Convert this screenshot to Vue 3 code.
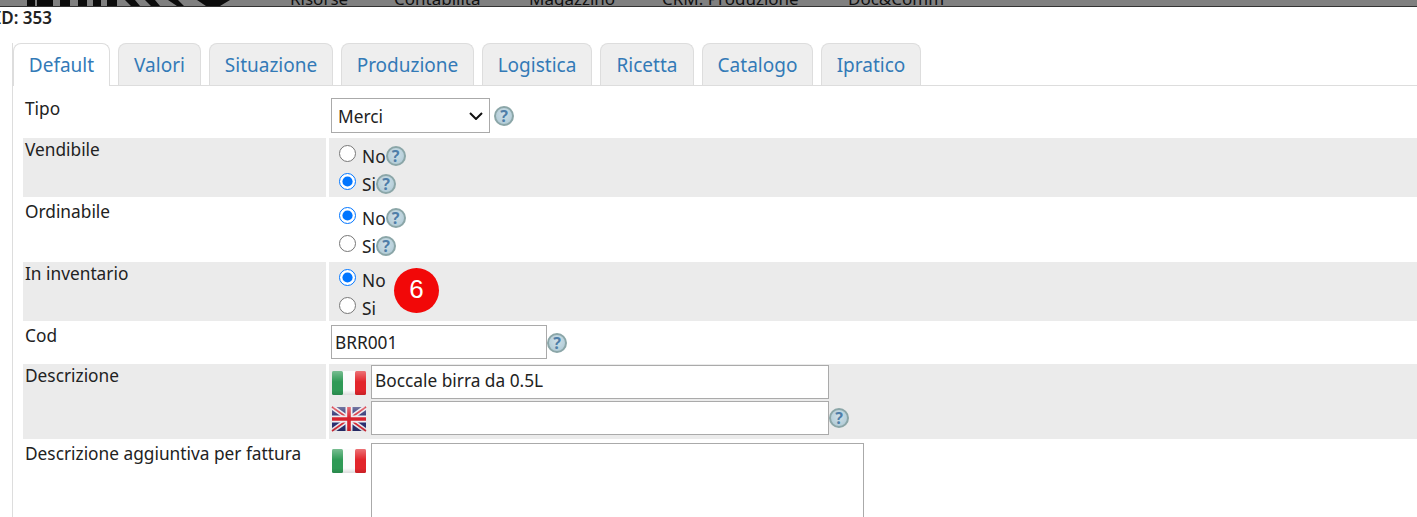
<script setup>
const tabs = [
  { t: 'Default', w: 97 },
  { t: 'Valori', w: 83 },
  { t: 'Situazione', w: 124 },
  { t: 'Produzione', w: 133 },
  { t: 'Logistica', w: 110 },
  { t: 'Ricetta', w: 94 },
  { t: 'Catalogo', w: 111 },
  { t: 'Ipratico', w: 100 }
]
const nav = [
  { t: 'Risorse', w: 104 },
  { t: 'Contabilità', w: 135 },
  { t: 'Magazzino', w: 133 },
  { t: 'CRM: Produzione', w: 186 },
  { t: 'Doc&Comm', w: 100 }
]
const radios = [
  { label: 'Vendibile', name: 'v', checked: 'Si', help: true, badge: false },
  { label: 'Ordinabile', name: 'o', checked: 'No', help: true, badge: false },
  { label: 'In inventario', name: 'i', checked: 'No', help: false, badge: true }
]
</script>

<template>
  <div class="page">
    <svg class="defs" width="0" height="0" aria-hidden="true">
      <defs>
        <linearGradient id="gloss" x1="0" y1="0" x2="0" y2="1">
          <stop offset="0" stop-color="#fff" stop-opacity=".35" />
          <stop offset=".45" stop-color="#fff" stop-opacity="0" />
          <stop offset=".8" stop-color="#000" stop-opacity="0" />
          <stop offset="1" stop-color="#000" stop-opacity=".12" />
        </linearGradient>
      </defs>
    </svg>
    <header class="topbar">
      <svg class="logo" width="210" height="6" viewBox="0 0 210 6">
        <path d="M2 0h8v6H2zM12 0h16v6H12zM35 0h10v6H35zM53 0h9v6h-9zM68 0h8v6h-8zM82 0h10v6H82zM100 0h10l5 6h-9zM120 0h10l5 6h-9zM143 0h10l6 6h-7zM172 0h33l-10 6h-14z" fill="#0c0c0c" />
      </svg>
      <nav class="nav">
        <span v-for="n in nav" :key="n.t" class="navitem" :style="{ width: n.w + 'px' }">{{ n.t }}</span>
      </nav>
    </header>

    <div class="idline">ID: 353</div>

    <div class="tabpanel">
      <ul class="tabs">
        <li v-for="(t, i) in tabs" :key="t.t" class="tab" :class="{ active: i === 0 }" :style="{ width: t.w + 'px' }">{{ t.t }}</li>
      </ul>

      <div class="form">
        <div class="row plain tiporow">
          <div class="label">Tipo</div>
          <div class="value tipo">
            <div class="selectwrap">
              <select class="select"><option>Merci</option></select>
              <svg class="chev" width="14" height="8" viewBox="0 0 14 8"><path d="M1 1l6 6 6-6" fill="none" stroke="#111" stroke-width="2" /></svg>
            </div>
            <span class="help" aria-hidden="true">?</span>
          </div>
        </div>

        <div v-for="(r, i) in radios" :key="r.name" class="row" :class="i % 2 === 0 ? 'grey' : 'plain'">
          <div class="label">{{ r.label }}</div>
          <div class="value radios">
            <label class="radio">
              <input type="radio" :name="r.name" :checked="r.checked === 'No'" />
              <span class="rtext">No</span><span v-if="r.help" class="help tight">?</span>
            </label>
            <label class="radio">
              <input type="radio" :name="r.name" :checked="r.checked === 'Si'" />
              <span class="rtext">Si</span><span v-if="r.help" class="help tight">?</span>
            </label>
            <span v-if="r.badge" class="badge">6</span>
          </div>
        </div>

        <div class="row plain">
          <div class="label">Cod</div>
          <div class="value cod">
            <input class="input codinput" value="BRR001" />
            <span class="help">?</span>
          </div>
        </div>

        <div class="row grey">
          <div class="label">Descrizione</div>
          <div class="value descr">
            <div class="lang">
              <svg class="flag" viewBox="0 0 36 26">
                <rect x="1" y="1" width="34" height="24" rx="1.5" fill="#fbfbfb" />
                <rect x="1" y="1" width="11" height="24" rx="1.5" fill="#2f9a56" />
                <rect x="24" y="1" width="11" height="24" rx="1.5" fill="#e2252b" />
                <rect x="1" y="1" width="34" height="24" rx="1.5" fill="url(#gloss)" />
              </svg>
              <input class="input descinput" value="Boccale birra da 0.5L" />
            </div>
            <div class="lang">
              <svg class="flag" viewBox="0 0 36 26">
                <rect x="1" y="1" width="34" height="24" rx="1.5" fill="#2a2f70" />
                <path d="M1 1 35 25M35 1 1 25" stroke="#e8e8ee" stroke-width="5" />
                <path d="M1 1 35 25M35 1 1 25" stroke="#d42a35" stroke-width="1.6" />
                <path d="M18 1v24M1 13h34" stroke="#eeeef2" stroke-width="7" />
                <path d="M18 1v24M1 13h34" stroke="#d8232e" stroke-width="3.6" />
                <rect x="1" y="1" width="34" height="24" rx="1.5" fill="url(#gloss)" />
              </svg>
              <input class="input descinput" />
              <span class="help">?</span>
            </div>
          </div>
        </div>

        <div class="row plain">
          <div class="label">Descrizione aggiuntiva per fattura</div>
          <div class="value extra">
            <svg class="flag" viewBox="0 0 36 26">
              <rect x="1" y="1" width="34" height="24" rx="1.5" fill="#fbfbfb" />
              <rect x="1" y="1" width="11" height="24" rx="1.5" fill="#2f9a56" />
              <rect x="24" y="1" width="11" height="24" rx="1.5" fill="#e2252b" />
              <rect x="1" y="1" width="34" height="24" rx="1.5" fill="url(#gloss)" />
            </svg>
            <textarea class="area"></textarea>
          </div>
        </div>
      </div>
    </div>
  </div>
</template>

<style>
html, body { margin: 0; overflow: hidden; background: #fff; }
</style>

<style scoped>
.defs { position: absolute; }
.page {
  height: 517px;
  overflow: hidden;
  font-family: "Noto Sans", "Open Sans", sans-serif;
  font-size: 17.3px;
  color: #222;
  background: #fff;
}
.topbar {
  height: 6px;
  background: #808080;
  border-bottom: 1px solid #333;
  box-sizing: content-box;
  display: flex;
  overflow: hidden;
}
.logo { margin-left: 25px; flex: none; }
.nav {
  display: flex;
  margin-left: 55px;
  margin-top: -11px;
  font-size: 17px;
  line-height: 20px;
  color: #111;
}
.navitem { flex: none; white-space: nowrap; }
.idline {
  margin-left: -5px;
  margin-top: 1px;
  height: 20px;
  line-height: 20px;
  font-size: 17px;
  font-weight: 600;
  color: #222;
}
.tabpanel {
  margin: 15px 0 0 12px;
  border-left: 1px solid #ddd;
}
.tabs {
  list-style: none;
  margin: 0;
  padding: 0;
  height: 42px;
  display: flex;
  border-bottom: 1px solid #ddd;
  box-sizing: content-box;
}
.tab {
  box-sizing: border-box;
  flex: none;
  margin-right: 8px;
  height: 42px;
  line-height: 42px;
  font-size: 19px;
  text-align: center;
  color: #337ab7;
  background: #eee;
  border: 1px solid #ddd;
  border-bottom: 0;
  border-radius: 8px 8px 0 0;
}
.tab.active {
  background: #fff;
  height: 43px;
}
.form {
  display: flex;
  flex-direction: column;
  gap: 2px;
  padding: 9px 0 0 10px;
}
.row {
  display: grid;
  grid-template-columns: 303px 1fr;
  column-gap: 3px;
}
.row.grey .label, .row.grey .value { background: #ebebeb; }
.label { padding: 1px 2px 0 2px; line-height: 22px; white-space: nowrap; }
.row.plain .label { padding-top: 2px; }
.row.tiporow .label { padding-top: 3px; }
.value { padding-left: 2px; }
.tipo {
  display: flex;
  align-items: flex-start;
  gap: 4px;
  height: 41px;
  padding-top: 3px;
  box-sizing: border-box;
}
.selectwrap { position: relative; width: 159px; height: 35px; flex: none; }
.select {
  appearance: none;
  width: 159px;
  height: 35px;
  box-sizing: border-box;
  font: inherit;
  padding: 1px 0 0 6px;
  border: 1px solid #aaa;
  border-radius: 0;
  background: #fff;
  color: #222;
}
.chev { position: absolute; left: 138px; top: 14px; pointer-events: none; }
.tipo .help { margin-top: 8px; }
.help {
  display: inline-block;
  box-sizing: border-box;
  width: 20px;
  height: 20px;
  flex: none;
  border-radius: 50%;
  border: 2px solid #8ba6a8;
  background: radial-gradient(circle at 50% 40%, #cfe0e8, #aac6d2);
  color: #4f7ea8;
  font-size: 16px;
  font-weight: 700;
  line-height: 16px;
  text-align: center;
}
.radios {
  position: relative;
  height: 59px;
  box-sizing: border-box;
  padding: 3px 0 0 8px;
  display: flex;
  flex-direction: column;
}
.row:nth-child(3) .radios { height: 61px; padding-top: 4px; }
.radio { display: flex; align-items: flex-start; height: 28px; }
.radio input {
  width: 17px;
  height: 17px;
  margin: 4px 6px 0 2px;
  accent-color: #0075ff;
  flex: none;
}
.rtext { line-height: 22px; margin-top: 5px; }
.help.tight { margin-top: 5px; }
.badge {
  position: absolute;
  left: 65px;
  top: 6px;
  width: 45px;
  height: 45px;
  border-radius: 50%;
  background: #f20808;
  color: #fff;
  font-family: "Liberation Sans", sans-serif;
  font-size: 26px;
  line-height: 42px;
  text-align: center;
}
.cod {
  display: flex;
  align-items: flex-start;
  height: 39px;
  padding-top: 2px;
  box-sizing: border-box;
}
.cod .help { margin-top: 8px; }
.input {
  box-sizing: border-box;
  height: 34px;
  border: 1px solid #aaa;
  background: #fff;
  font: inherit;
  color: #222;
  padding: 0 3px;
  outline: none;
}
.codinput { width: 216px; }
.descr { padding-top: 1px; height: 75px; box-sizing: border-box; }
.lang { display: flex; align-items: flex-start; height: 36px; }
.flag { width: 36px; height: 26px; flex: none; margin: 5px 4px 0 0; filter: blur(0.4px); }
.descinput { width: 458px; flex: none; padding-bottom: 3px; }
.lang .help { margin-top: 7px; }
.extra { display: flex; align-items: flex-start; padding-top: 2px; }
.extra .flag { margin-top: 5px; }
.area {
  box-sizing: border-box;
  width: 493px;
  height: 110px;
  border: 1px solid #aaa;
  background: #fff;
  resize: none;
  outline: none;
}
</style>
